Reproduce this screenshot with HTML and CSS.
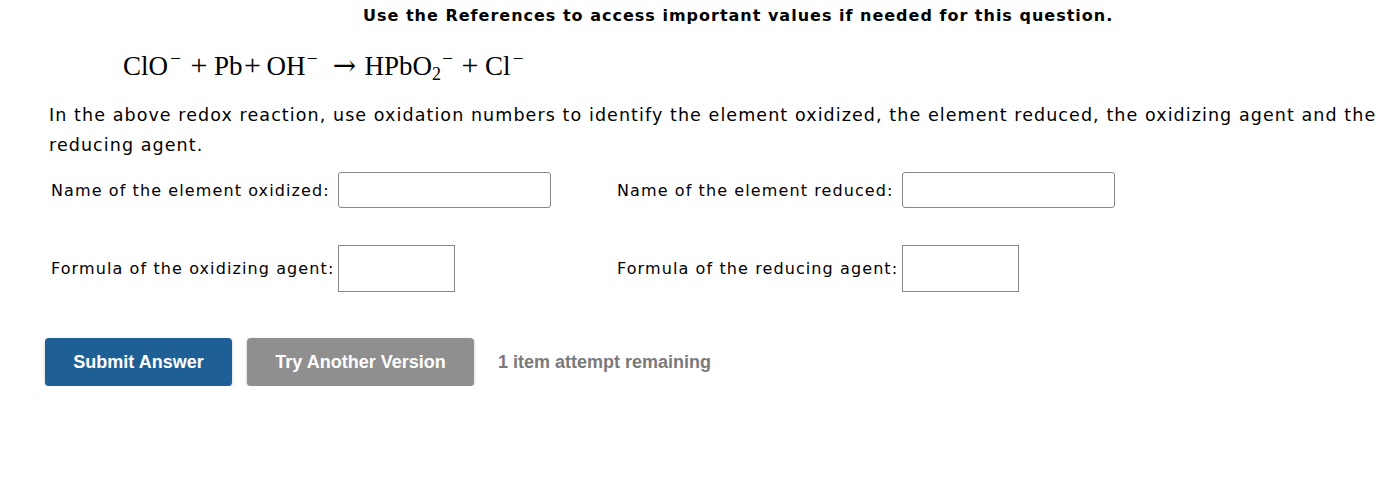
FILE: index.html
```html
<!DOCTYPE html>
<html>
<head>
<meta charset="utf-8">
<link rel="stylesheet" href="styles.css">
</head>
<body>
<div class="page">
  <div class="refs">Use the References to access important values if needed for this question.</div>
  <div class="equation"><span class="t">ClO</span><span class="sup s1">−</span><span class="op o1">+</span><span class="t">Pb</span><span class="op o2">+</span><span class="t">OH</span><span class="sup s2">−</span><span class="arrow">→</span><span class="t">HPbO</span><span class="sub">2</span><span class="sup s3">−</span><span class="op o3">+</span><span class="t">Cl</span><span class="sup s4">−</span></div>
  <p class="question">In the above redox reaction, use oxidation numbers to identify the element oxidized, the element reduced, the oxidizing agent and the reducing agent.</p>
  <div class="form">
    <div class="field row1"><label>Name of the element oxidized:</label><input class="wide" type="text"></div>
    <div class="field row1"><label>Name of the element reduced:</label><input class="wide" type="text"></div>
    <div class="field row2"><label>Formula of the oxidizing agent:</label><input class="box" type="text"></div>
    <div class="field row2"><label>Formula of the reducing agent:</label><input class="box" type="text"></div>
  </div>
  <div class="actions">
    <button class="btn submit">Submit Answer</button>
    <button class="btn other">Try Another Version</button>
    <span class="remaining">1 item attempt remaining</span>
  </div>
</div>
</body>
</html>
```
FILE: styles.css
```css
html, body { margin: 0; padding: 0; background: #fff; overflow-x: hidden; }
.page { font-family: "DejaVu Sans", Verdana, sans-serif; color: #000; }
.refs {
  font-weight: bold;
  font-size: 16px;
  letter-spacing: 1px;
  height: 30px;
  line-height: 20px;
  padding: 6px 0 0 363px;
  box-sizing: border-box;
}
.equation {
  font-family: "Liberation Serif", "Times New Roman", serif;
  font-size: 27px;
  height: 70px;
  line-height: 60px;
  padding: 5px 0 0 123px;
  box-sizing: border-box;
  display: flex;
  align-items: baseline;
}
.equation .t { display: inline-block; }
.equation .sup {
  display: inline-block;
  width: 11px;
  text-align: center;
  font-size: 19px;
  position: relative;
  top: -10px;
}
.equation .s1 { margin-left: 2px; }
.equation .s2 { margin-left: 1px; }
.equation .s3 { margin-left: 1px; }
.equation .s4 { margin-left: 2px; }
.equation .sub {
  display: inline-block;
  width: 9px;
  text-align: center;
  font-size: 18px;
  position: relative;
  top: 5px;
}
.equation .op {
  display: inline-block;
  width: 20px;
  text-align: center;
  font-size: 30px;
}
.equation .o1 { margin: 0 5px 0 8px; }
.equation .o2 { margin: 0 4px 0 0; }
.equation .o3 { margin: 0 5px 0 7px; }
.equation .arrow {
  display: inline-block;
  width: 24px;
  text-align: center;
  font-family: "DejaVu Serif", serif;
  font-size: 28px;
  margin: 0 8px 0 15px;
}
.question {
  margin: 0 0 0 49px;
  font-size: 17.5px;
  letter-spacing: 1.08px;
  line-height: 30px;
  width: 1345px;
}
.form {
  display: grid;
  grid-template-columns: 566px auto;
  margin: 12px 0 0 51px;
  row-gap: 37px;
}
.field { display: flex; align-items: center; font-size: 16px; letter-spacing: 1.1px; }
.field label { margin-right: 8px; }
.row2 label { margin-right: 4px; }
input {
  box-sizing: border-box;
  border: 1px solid #888;
  background: #fff;
  padding: 0;
  margin: 0;
  font: inherit;
}
.wide { width: 213px; height: 36px; border-radius: 3px; }
.box { width: 117px; height: 47px; border-radius: 0; }
.actions {
  display: flex;
  align-items: center;
  margin: 46px 0 0 45px;
}
.btn {
  font-family: "Liberation Sans", Arial, sans-serif;
  font-weight: bold;
  font-size: 18px;
  color: #fff;
  border: none;
  border-radius: 4px;
  height: 48px;
  padding: 0;
  box-shadow: 0 1px 3px rgba(0,0,0,0.25);
}
.submit { background: #1e5f96; width: 187px; }
.other { background: #8f8f8f; width: 227px; margin-left: 15px; }
.remaining {
  font-family: "Liberation Sans", Arial, sans-serif;
  font-weight: bold;
  font-size: 18px;
  color: #7a7a7a;
  margin-left: 24px;
}
```
